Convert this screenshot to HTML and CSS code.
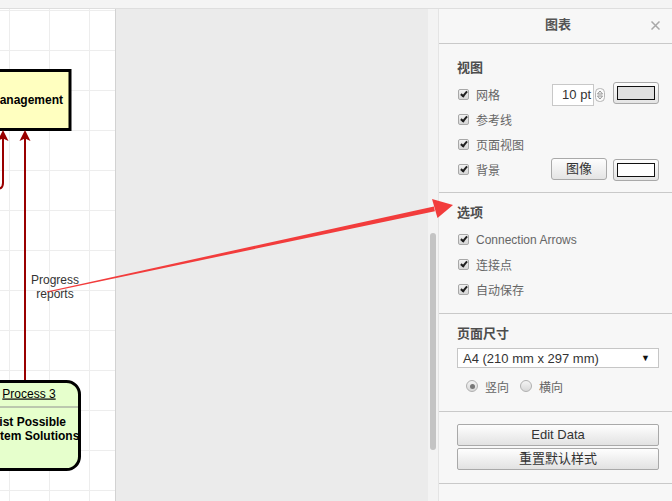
FILE: index.html
```html
<!DOCTYPE html>
<html>

<head>
  <meta charset="UTF-8">
  <title>图表</title>
  <link rel="stylesheet" href="styles.css">
</head>

<body>
  <div class="topbar"></div>

  <div class="main">
    <!-- Área de desenho -->
    <div class="canvas">
      <div class="page">
        <svg class="diagram" width="115" height="492" viewBox="0 0 115 492">
          <rect x="-80" y="61.5" width="150" height="59" fill="#ffffc0" stroke="#000" stroke-width="3"/>
          <text x="63" y="95" text-anchor="end" class="node-text bold">Management</text>

          <path d="M25 129 V371" stroke="#990000" stroke-width="2" fill="none"/>
          <polygon points="25,121 30.5,132 25,129.5 19.5,132" fill="#990000"/>
          <path d="M3 129 V174 Q3 180 -3 180" stroke="#990000" stroke-width="2" fill="none"/>
          <polygon points="3,121 8.5,132 3,129.5 -2.5,132" fill="#990000"/>

          <text x="55" y="275" text-anchor="middle" class="edge-text">Progress</text>
          <text x="55" y="288.7" text-anchor="middle" class="edge-text">reports</text>

          <rect x="-22" y="372.5" width="101.5" height="88" rx="13" fill="#e6ffcc" stroke="#000" stroke-width="3"/>
          <line x1="-22" y1="398" x2="78" y2="398" stroke="#909090" stroke-width="1"/>
          <text x="29" y="388.5" text-anchor="middle" class="node-text underline">Process 3</text>
          <text x="29" y="417" text-anchor="middle" class="node-text bold">List Possible</text>
          <text x="29" y="430.5" text-anchor="middle" class="node-text bold">System Solutions</text>
        </svg>
      </div>
      <div class="canvas-gap"></div>
      <div class="scroll">
        <div class="scroll-thumb"></div>
      </div>
    </div>

    <!-- Painel de formatação -->
    <div class="panel">
      <div class="panel-head">
        <span class="panel-title">图表</span>
        <svg class="close" width="9" height="9" viewBox="0 0 9 9">
          <path d="M0.5 0.5 L8.5 8.5 M8.5 0.5 L0.5 8.5" stroke="#a8a8a8" stroke-width="1.5"/>
        </svg>
      </div>

      <div class="section">
        <div class="section-title">视图</div>
        <div class="row">
          <label class="check"><span class="cb"></span>网格</label>
          <div class="num">
            <span class="num-field">10 pt</span>
            <svg class="spin" width="12" height="22" viewBox="0 0 12 22">
              <rect x="1.5" y="4.5" width="9" height="13" rx="4" fill="#fafafa" stroke="#b5b5b5"/>
              <path d="M3.5 10 L6 7 L8.5 10 Z" fill="none" stroke="#888" stroke-width="0.9"/>
              <path d="M3.5 12 L6 15 L8.5 12 Z" fill="none" stroke="#888" stroke-width="0.9"/>
            </svg>
          </div>
          <span class="color-btn up"><span class="swatch grey"></span></span>
        </div>
        <div class="row">
          <label class="check"><span class="cb"></span>参考线</label>
        </div>
        <div class="row">
          <label class="check"><span class="cb"></span>页面视图</label>
        </div>
        <div class="row">
          <label class="check"><span class="cb"></span>背景</label>
          <span class="small-btn">图像</span>
          <span class="color-btn"><span class="swatch"></span></span>
        </div>
      </div>

      <div class="section">
        <div class="section-title">选项</div>
        <div class="row">
          <label class="check"><span class="cb"></span>Connection Arrows</label>
        </div>
        <div class="row">
          <label class="check"><span class="cb"></span>连接点</label>
        </div>
        <div class="row">
          <label class="check"><span class="cb"></span>自动保存</label>
        </div>
      </div>

      <div class="section section-page">
        <div class="section-title">页面尺寸</div>
        <div class="select">A4 (210 mm x 297 mm)<span class="caret">▼</span></div>
        <div class="radio-row">
          <span class="radio on"></span><span class="radio-label">竖向</span>
          <span class="radio"></span><span class="radio-label">横向</span>
        </div>
      </div>

      <div class="section section-actions">
        <div class="btn">Edit Data</div>
        <div class="btn">重置默认样式</div>
      </div>
    </div>
  </div>

  <!-- Seta vermelha de anotação -->
  <svg class="annotation" width="672" height="501" viewBox="0 0 672 501">
    <polygon points="47.1,292.5 46.9,291.5 433.9,206.4 434.9,211.2" fill="#f23c3c"/>
    <polygon points="453,205 432,199 437.5,218" fill="#f23c3c"/>
  </svg>
</body>

</html>
```

FILE: styles.css
```css
body {
  margin: 0;
  width: 672px;
  height: 501px;
  overflow: hidden;
  position: relative;
  font-family: "Liberation Sans", "Noto Sans CJK SC", sans-serif;
  background-color: #ebebeb;
}

.topbar {
  height: 8px;
  background-color: #f4f4f4;
  border-bottom: 1px solid #dedede;
}

.main {
  display: flex;
  height: 492px;
}

/* Área do desenho */
.canvas {
  flex: 1;
  display: flex;
  background-color: #ebebeb;
  overflow: hidden;
}

.page {
  width: 115px;
  flex: 0 0 115px;
  position: relative;
  border-right: 1px solid #d2d2d2;
  background-color: #fff;
  background-image:
    linear-gradient(90deg, #ededed 1px, transparent 1px),
    linear-gradient(#ededed 1px, transparent 1px);
  background-size: 40px 40px;
  background-position: 9px 1px;
}

.diagram {
  position: absolute;
  top: 0;
  left: 0;
}

.node-text {
  font-family: "Liberation Sans", sans-serif;
  font-size: 12px;
  fill: #000;
}

.bold {
  font-weight: bold;
}

.underline {
  text-decoration: underline;
}

.edge-text {
  font-family: "Liberation Sans", sans-serif;
  font-size: 12px;
  fill: #333;
}

.canvas-gap {
  flex: 1;
}

.scroll {
  width: 10px;
  flex: 0 0 10px;
  background-color: #f3f3f3;
  padding-top: 224px;
  box-sizing: border-box;
}

.scroll-thumb {
  width: 6px;
  height: 217px;
  margin-left: 2px;
  background-color: #c4c4c4;
  border-radius: 3px;
}

/* Painel lateral */
.panel {
  width: 234px;
  flex: 0 0 234px;
  box-sizing: border-box;
  background-color: #f7f7f7;
  border-left: 1px solid #e4e4e4;
  color: #666;
  font-size: 12px;
}

.panel-head {
  height: 34px;
  display: flex;
  align-items: center;
  padding-left: 26px;
  border-bottom: 1px solid #c9c9c9;
}

.panel-title {
  flex: 1;
  text-align: center;
  font-size: 13px;
  line-height: 13px;
  margin-top: -3px;
  font-weight: bold;
  color: #555;
}

.close {
  margin: -1px 12px 0 0;
}

.section {
  padding: 16px 13px 10px 18px;
  border-bottom: 1px solid #c9c9c9;
}

.section + .section {
  padding-top: 12px;
  padding-bottom: 11px;
}

.section-title {
  height: 16px;
  line-height: 16px;
  font-size: 13px;
  font-weight: bold;
  color: #4d4d4d;
  margin-bottom: 6px;
}

.row {
  height: 25px;
  display: flex;
  align-items: center;
}

.check {
  display: flex;
  align-items: center;
  gap: 7px;
  color: #666;
}

.cb {
  width: 11px;
  height: 11px;
  margin-left: 1px;
  box-sizing: border-box;
  border: 1px solid #a8a8a8;
  border-radius: 2px;
  background: linear-gradient(#f2f2f2, #d6d6d6);
  position: relative;
}

.cb::after {
  content: "";
  position: absolute;
  left: 3px;
  top: 0px;
  width: 2px;
  height: 5px;
  border-right: 2px solid #1e1e1e;
  border-bottom: 2px solid #1e1e1e;
  transform: rotate(40deg);
}

.num {
  display: flex;
  align-items: center;
  margin-left: auto;
  margin-right: 7px;
}

.num-field {
  width: 42px;
  height: 22px;
  box-sizing: border-box;
  border: 1px solid #c8c8c8;
  background-color: #fff;
  text-align: right;
  padding-right: 2px;
  line-height: 20px;
  font-size: 13px;
  color: #333;
}

.color-btn {
  width: 46px;
  height: 22px;
  box-sizing: border-box;
  border: 1px solid #a9a9a9;
  border-radius: 3px;
  background: linear-gradient(#fdfdfd, #e4e4e4);
  display: flex;
  align-items: center;
  justify-content: center;
}

.color-btn.up {
  margin-top: -3px;
}

.swatch {
  width: 38px;
  height: 14px;
  box-sizing: border-box;
  border: 1px solid #111;
  background-color: #fff;
}

.swatch.grey {
  background-color: #e0e0e0;
}

.small-btn {
  width: 56px;
  height: 22px;
  box-sizing: border-box;
  margin-left: auto;
  margin-right: 6px;
  margin-top: -2px;
  border: 1px solid #a9a9a9;
  border-radius: 3px;
  background: linear-gradient(#fdfdfd, #e4e4e4);
  text-align: center;
  line-height: 20px;
  font-size: 13px;
  color: #333;
}

.select {
  margin-top: 6px;
  height: 20px;
  box-sizing: border-box;
  border: 1px solid #c6c6c6;
  background-color: #fff;
  display: flex;
  align-items: center;
  padding: 0 8px 0 5px;
  font-size: 13px;
  color: #333;
}

.caret {
  margin-left: auto;
  font-size: 9px;
  color: #111;
}

.radio-row {
  margin-top: 6px;
  height: 24px;
  display: flex;
  align-items: center;
  padding-left: 9px;
}

.radio {
  width: 12px;
  height: 12px;
  box-sizing: border-box;
  border: 1px solid #b0b0b0;
  border-radius: 50%;
  background: linear-gradient(#f4f4f4, #d8d8d8);
  display: flex;
  align-items: center;
  justify-content: center;
}

.radio.on::after {
  content: "";
  width: 5px;
  height: 5px;
  border-radius: 50%;
  background-color: #777;
}

.radio-label {
  margin-left: 7px;
  margin-right: 11px;
  color: #666;
}

.section-actions {
  padding-bottom: 13px !important;
}

.section-page {
  padding-bottom: 13px !important;
}

.btn {
  height: 22px;
  box-sizing: border-box;
  border: 1px solid #a9a9a9;
  border-radius: 2px;
  background: linear-gradient(#fefefe, #e2e2e2);
  text-align: center;
  line-height: 20px;
  font-size: 13px;
  color: #333;
}

.btn + .btn {
  margin-top: 2px;
}

.annotation {
  position: absolute;
  top: 0;
  left: 0;
  pointer-events: none;
}
```
